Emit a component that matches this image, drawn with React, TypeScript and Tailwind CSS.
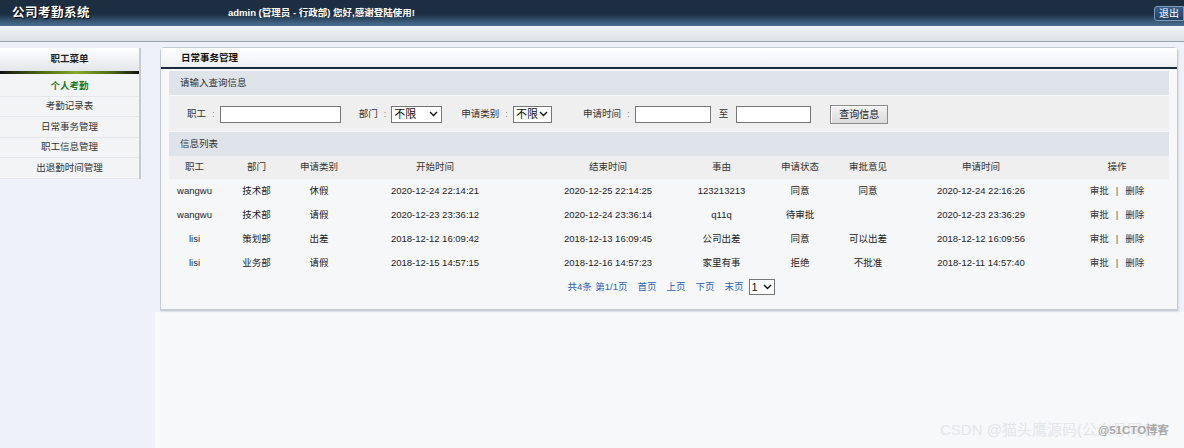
import React from "react";

const FONT = "font-['Liberation_Sans','Noto_Sans_CJK_SC',sans-serif]";

const MENU = ["个人考勤", "考勤记录表", "日常事务管理", "职工信息管理", "出退勤时间管理"];

const COLS = ["职工", "部门", "申请类别", "开始时间", "结束时间", "事由", "申请状态", "审批意见", "申请时间", "操作"];

const ROWS = [
  ["wangwu", "技术部", "休假", "2020-12-24 22:14:21", "2020-12-25 22:14:25", "123213213", "同意", "同意", "2020-12-24 22:16:26"],
  ["wangwu", "技术部", "请假", "2020-12-23 23:36:12", "2020-12-24 23:36:14", "q11q", "待审批", "", "2020-12-23 23:36:29"],
  ["lisi", "策划部", "出差", "2018-12-12 16:09:42", "2018-12-13 16:09:45", "公司出差", "同意", "可以出差", "2018-12-12 16:09:56"],
  ["lisi", "业务部", "请假", "2018-12-15 14:57:15", "2018-12-16 14:57:23", "家里有事", "拒绝", "不批准", "2018-12-11 14:57:40"],
];

const GRID = "grid grid-cols-[51px_73px_52px_180px_166px_61px_96px_40px_186px_86px]";

function Chevron(): React.ReactElement {
  return (
    <svg width="9" height="6" viewBox="0 0 9 6" aria-hidden="true">
      <path d="M1 1l3.5 3.5L8 1" fill="none" stroke="#111" strokeWidth="1.4" />
    </svg>
  );
}

function FakeSelect({ value, width }: { value: string; width: string }): React.ReactElement {
  return (
    <div className={`flex h-[17px] items-center justify-between border border-[#767676] bg-white pl-[2px] pr-[3px] text-[11px] text-[#111] ${width}`}>
      <span>{value}</span>
      <Chevron />
    </div>
  );
}

function Label({ text, className }: { text: string; className: string }): React.ReactElement {
  return (
    <span className={`whitespace-nowrap text-[#333] ${className}`}>
      {text}
      <span className="ml-[6px] mr-[5px] text-[#888]">:</span>
    </span>
  );
}

function Sidebar(): React.ReactElement {
  return (
    <aside className="w-[155px] shrink-0">
      <div className="mt-[6px] w-[141px] border-r-2 border-[#c6cbd2] bg-[#f3f4f6]">
        <div className="flex h-[23px] items-center justify-center rounded-tr-[3px] bg-[linear-gradient(to_bottom,#ffffff,#e3e6ea)] font-bold text-[#222]">
          职工菜单
        </div>
        <div className="h-[3px] bg-[linear-gradient(to_right,#111_0%,#4e6b14_30%,#88a82c_55%,#4e6b14_80%,#111_100%)]" />
        <div className="pt-[2px]">
          {MENU.map((item, i) => (
            <div
              key={item}
              className={`flex h-[20.5px] items-center justify-center border-b border-[#e5e7ea] ${
                i === 0 ? "font-bold text-[#1d7a1d]" : "text-[#333]"
              }`}
            >
              {item}
            </div>
          ))}
        </div>
      </div>
    </aside>
  );
}

function QueryForm(): React.ReactElement {
  return (
    <div className="mt-[1px] flex h-[35px] items-center bg-[#efefef] pt-[1px]">
      <Label text="职工" className="ml-[18px]" />
      <div className="h-[17px] w-[121px] border border-[#767676] bg-white" />
      <Label text="部门" className="ml-[18px]" />
      <FakeSelect value="不限" width="w-[51px]" />
      <Label text="申请类别" className="ml-[19px]" />
      <FakeSelect value="不限" width="w-[39px]" />
      <Label text="申请时间" className="ml-[31px]" />
      <div className="h-[17px] w-[76px] border border-[#767676] bg-white" />
      <span className="mx-[8px] text-[#333]">至</span>
      <div className="h-[17px] w-[75px] border border-[#767676] bg-white" />
      <button className="ml-[19px] h-[19px] w-[58px] border border-[#8a8a8a] bg-[linear-gradient(to_bottom,#f2f2f2,#dcdcdc)] text-[10px] text-[#222] shadow-[inset_1px_1px_0_#fff]">
        查询信息
      </button>
    </div>
  );
}

function DataTable(): React.ReactElement {
  return (
    <div>
      <div className={`${GRID} h-[23px] items-center bg-[#efefef] text-[#333]`}>
        {COLS.map((c) => (
          <div key={c} className="text-center">
            {c}
          </div>
        ))}
      </div>
      {ROWS.map((row, r) => (
        <div key={r} className={`${GRID} h-[24px] items-center text-[#222]`}>
          {row.map((cell, i) => (
            <div key={i} className="whitespace-nowrap text-center">
              {cell}
            </div>
          ))}
          <div className="whitespace-nowrap text-center text-[#333]">
            审批<span className="mx-[7px] text-[#555]">|</span>删除
          </div>
        </div>
      ))}
      <div className="flex h-[24px] items-center justify-center gap-[10px] pl-[4px] text-[#2f5fb0]">
        <span>
          共4条 <span className="ml-[1px]">第1/1页</span>
        </span>
        <span>首页</span>
        <span>上页</span>
        <span>下页</span>
        <span className="flex items-center gap-[5px]">
          末页
          <span className="flex h-[16px] w-[26px] items-center justify-between border border-[#767676] bg-white px-[2px] text-[11px] text-[#111]">
            1
            <Chevron />
          </span>
        </span>
      </div>
    </div>
  );
}

function Panel(): React.ReactElement {
  return (
    <div className="rounded-t-[4px] border border-[#c3cad3] bg-[#f6f7f9] shadow-[1px_1px_2px_rgba(0,0,0,0.08)]">
      <div className="flex h-[21px] items-end border-b-2 border-[#1b2a3a] bg-[linear-gradient(to_bottom,#ffffff,#edf0f3)] pb-[2px] pl-[20px] font-bold text-[#111]">
        日常事务管理
      </div>
      <div className="border-b border-[#c9ced6] px-[8px] pb-[10px] pt-[2px]">
        <div className="flex h-[24px] items-center bg-[#dfe3ea] pl-[11px] text-[#333]">请输入查询信息</div>
        <QueryForm />
        <div className="mt-[1px] flex h-[24px] items-center bg-[#dfe3ea] pl-[11px] text-[#333]">信息列表</div>
        <DataTable />
      </div>
    </div>
  );
}

export default function App(): React.ReactElement {
  return (
    <div className={`relative flex h-[448px] w-[1184px] flex-col overflow-hidden bg-[#eef2f8] text-[9.5px] ${FONT}`}>
      <header className="flex h-[26px] items-center bg-[linear-gradient(to_bottom,#1c2e40_0%,#1c2f43_55%,#4b7295_100%)]">
        <h1 className="ml-[12px] w-[216px] text-[12.5px] font-bold tracking-[0.5px] text-white [text-shadow:1px_1px_1px_#000]">
          公司考勤系统
        </h1>
        <span className="font-bold text-white">admin (管理员 - 行政部) 您好,感谢登陆使用!</span>
        <span className="ml-auto flex h-[15px] w-[30px] items-center justify-center rounded-l-[3px] border border-[#7d9bbd] bg-[linear-gradient(to_bottom,#3c5f86,#22405f)] text-[10px] text-white">
          退出
        </span>
      </header>
      <div className="h-[16px] border-b border-[#9aa4ae] bg-[linear-gradient(to_bottom,#f2f4f7,#dde1e6)]" />
      <div className="flex flex-1">
        <Sidebar />
        <main className="flex-1 bg-[#f7f8fa]">
          <div className="bg-[#eef2f8] pb-[1px] pl-[5px] pr-[6px] pt-[5px]">
            <Panel />
          </div>
        </main>
      </div>
      <div className="absolute bottom-[7px] left-[940px] whitespace-nowrap text-[15px] text-[#e4e6e9]">
        CSDN @猫头鹰源码(公众号同名)
      </div>
      <div className="absolute bottom-[9px] left-[1098px] whitespace-nowrap text-[11.5px] font-bold text-[#a9a9a9]">
        @51CTO博客
      </div>
    </div>
  );
}
